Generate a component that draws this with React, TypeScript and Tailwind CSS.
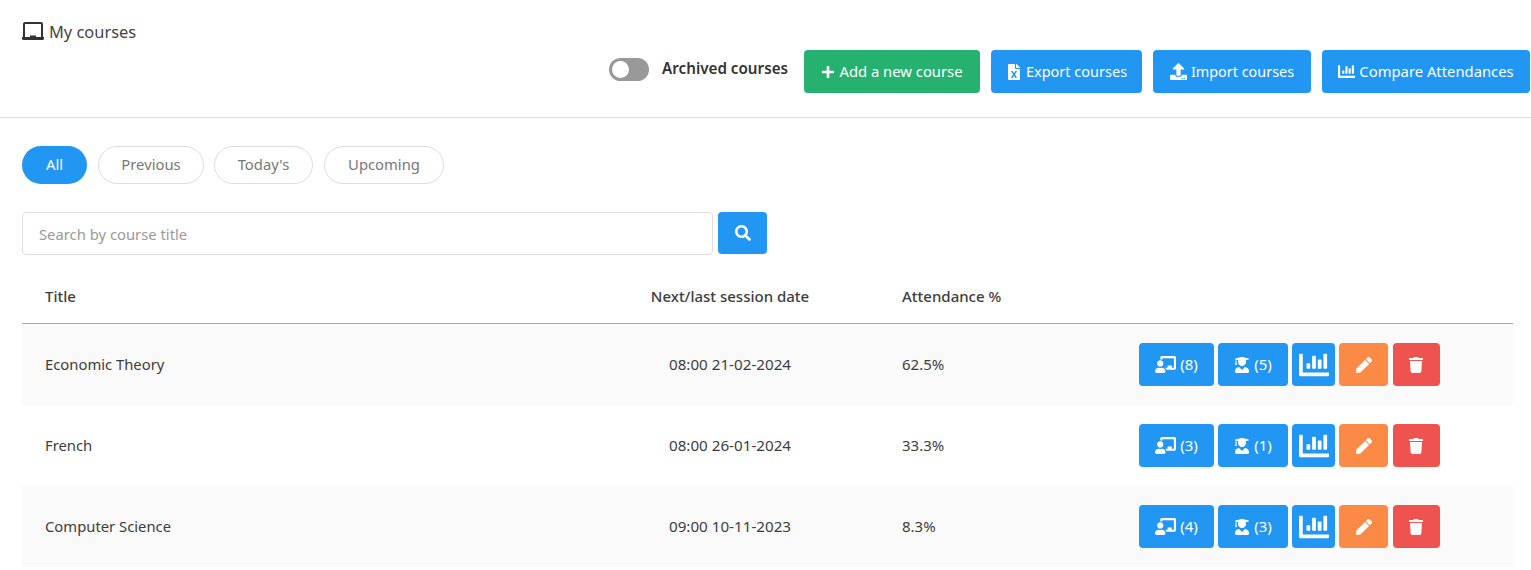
import { FaChalkboardTeacher, FaChartBar, FaFileExcel, FaPen, FaPlus, FaSearch, FaTrash, FaUpload, FaUserGraduate } from 'react-icons/fa'

const courses = [
  { title: 'Economic Theory', date: '08:00 21-02-2024', attendance: '62.5%', sessions: 8, students: 5 },
  { title: 'French', date: '08:00 26-01-2024', attendance: '33.3%', sessions: 3, students: 1 },
  { title: 'Computer Science', date: '09:00 10-11-2023', attendance: '8.3%', sessions: 4, students: 3 },
]

function LaptopIcon() {
  return (
    <svg width="22" height="18" viewBox="0 0 22 18" fill="none" className="shrink-0 mb-0.5">
      <path d="M2 15V2a1 1 0 0 1 1-1h16a1 1 0 0 1 1 1v13" stroke="#333" strokeWidth="2" />
      <path d="M0 15h8v-1.500h6V15h8v1.500a1.500 1.500 0 0 1-1.500 1.500h-19A1.500 1.500 0 0 1 0 16.500z" fill="#333" />
    </svg>
  )
}

export default function App() {
  return (
    <div className="font-['Noto_Sans',sans-serif] text-[14.8px] text-[#3d3d3d] bg-white h-[570px] overflow-hidden">
      <header className="h-[118px] border-b border-[#dedede] flex justify-between pl-[22px] pr-px">
        <h1 className="flex items-center gap-[5px] h-fit pt-5 text-[16.4px] font-normal text-[#444]">
          <LaptopIcon />
          My courses
        </h1>
        <div className="flex items-start gap-[11px] pt-[50px]">
          <div className="flex items-center h-[38px] mr-[5px]">
            <span className="w-10 h-[23px] rounded-full bg-[#999] p-[3px] mr-[13px]">
              <span className="block w-[17px] h-[17px] rounded-full bg-white" />
            </span>
            <span className="font-semibold text-[15.2px] text-[#333] pb-0.5">Archived courses</span>
          </div>
          <button className="h-[43px] w-[176px] rounded bg-[#26b170] text-white flex items-center justify-center gap-1">
            <FaPlus size={14} />
            Add a new course
          </button>
          <button className="h-[43px] w-[151px] rounded bg-[#2196f3] text-white text-[14.5px] flex items-center justify-center gap-1">
            <FaFileExcel size={16} />
            Export courses
          </button>
          <button className="h-[43px] w-[158px] rounded bg-[#2196f3] text-white text-[14.4px] flex items-center justify-center gap-1">
            <FaUpload size={17} />
            Import courses
          </button>
          <button className="h-[43px] w-[208px] rounded bg-[#2196f3] text-white flex items-center justify-center gap-1">
            <FaChartBar size={17} />
            Compare Attendances
          </button>
        </div>
      </header>

      <main className="ml-[22px] w-[1491px]">
        <div className="flex pt-7">
          <button className="h-[38px] w-[65px] pb-0.5 rounded-full bg-[#2196f3] text-white">All</button>
          <button className="h-[38px] w-[106px] ml-[11px] pb-0.5 rounded-full border border-[#dedede] text-[#777]">Previous</button>
          <button className="h-[38px] w-[99px] ml-[10px] pb-0.5 rounded-full border border-[#dedede] text-[#777]">Today's</button>
          <button className="h-[38px] w-[120px] ml-[11px] pb-0.5 rounded-full border border-[#dedede] text-[#777]">Upcoming</button>
        </div>

        <div className="flex gap-[5px] mt-7">
          <input
            placeholder="Search by course title"
            className="w-[691px] h-[43px] px-4 rounded border border-[#dedede] text-[14.8px] outline-none placeholder:text-[#999]"
          />
          <button className="w-[49px] h-[42px] rounded bg-[#2196f3] text-white flex items-center justify-center">
            <FaSearch size={16} />
          </button>
        </div>

        <div className="mt-[17px]">
          <div className="grid grid-cols-[586px_244px_287px_1fr] items-center h-[52px] pb-0.5 border-b border-[#aaa] font-medium text-[15px]">
            <div className="pl-[23px]">Title</div>
            <div className="text-center">Next/last session date</div>
            <div className="pl-[50px]">Attendance %</div>
            <div />
          </div>
          {courses.map((course, i) => (
            <div
              key={course.title}
              className={`grid grid-cols-[586px_244px_287px_1fr] items-center h-[81px] ${i % 2 === 0 ? 'bg-[#fafafa]' : 'bg-white'}`}
            >
              <div className="pl-[23px]">{course.title}</div>
              <div className="text-center text-[15.2px]">{course.date}</div>
              <div className="pl-[50px] text-[15px]">{course.attendance}</div>
              <div className="flex gap-1 text-[15px]">
                <button className="h-[43px] w-[75px] rounded bg-[#2196f3] text-white flex items-center justify-center gap-1">
                  <FaChalkboardTeacher size={21} />({course.sessions})
                </button>
                <button className="h-[43px] w-[70px] rounded bg-[#2196f3] text-white flex items-center justify-center gap-1">
                  <FaUserGraduate size={16} />({course.students})
                </button>
                <button className="h-[43px] w-[43px] rounded bg-[#2196f3] text-white flex items-center justify-center">
                  <FaChartBar size={30} />
                </button>
                <button className="h-[43px] w-[49px] rounded bg-[#fb8a46] text-white flex items-center justify-center">
                  <FaPen size={16} />
                </button>
                <button className="h-[43px] w-[47px] ml-px pr-0.5 rounded bg-[#ef5350] text-white flex items-center justify-center">
                  <FaTrash size={16} />
                </button>
              </div>
            </div>
          ))}
        </div>
      </main>
    </div>
  )
}
